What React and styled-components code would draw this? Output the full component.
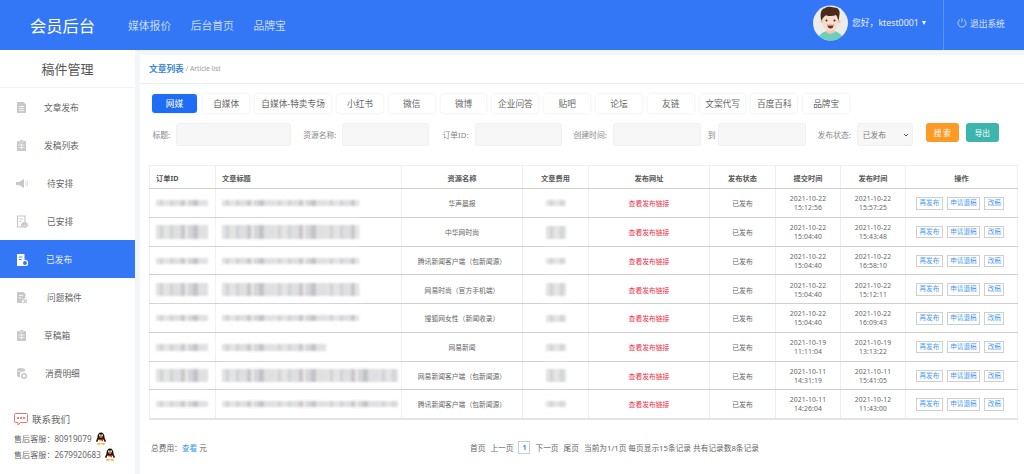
import styled, { createGlobalStyle } from "styled-components";

const GlobalStyle = createGlobalStyle`
  html, body {
    margin: 0;
    padding: 0;
    background: #f1f7f9;
    font-family: "Noto Sans", "Noto Sans CJK SC", sans-serif;
  }
  * {
    box-sizing: border-box;
  }
`;

const NAV_LINKS = ["媒体报价", "后台首页", "品牌宝"];
const TABS = ["网媒", "自媒体", "自媒体-特卖专场", "小红书", "微信", "微博", "企业问答", "贴吧", "论坛", "友链", "文案代写", "百度百科", "品牌宝"];
const MENU = [
  { label: "文章发布", icon: "doc", gap: 18 },
  { label: "发稿列表", icon: "list", gap: 18 },
  { label: "待安排", icon: "speaker", gap: 21 },
  { label: "已安排", icon: "check", gap: 21 },
  { label: "已发布", icon: "send", gap: 20, active: true },
  { label: "问题稿件", icon: "issue", gap: 21 },
  { label: "草稿箱", icon: "list", gap: 18 },
  { label: "消费明细", icon: "coins", gap: 19 },
];
const ROWS = [
  { id: 6, title: 6, tw: 137, fee: 6, media: "华声晨报", sub: "2021-10-22|15:12:56", pub: "2021-10-22|15:57:25" },
  { id: 14, title: 14, tw: 137, fee: 13, media: "中华网时尚", sub: "2021-10-22|15:04:40", pub: "2021-10-22|15:43:48" },
  { id: 6, title: 6, tw: 137, fee: 6, media: "腾讯新闻客户端（包新闻源）", sub: "2021-10-22|15:04:40", pub: "2021-10-22|16:58:10" },
  { id: 13, title: 13, tw: 137, fee: 13, media: "网易时尚（官方手机端）", sub: "2021-10-22|15:04:40", pub: "2021-10-22|15:12:11" },
  { id: 6, title: 6, tw: 137, fee: 7, media: "搜狐网女性（新闻收录）", sub: "2021-10-22|15:04:40", pub: "2021-10-22|16:09:43" },
  { id: 7, title: 7, tw: 104, fee: 7, media: "网易新闻", sub: "2021-10-19|11:11:04", pub: "2021-10-19|13:13:22" },
  { id: 13, title: 13, tw: 176, fee: 13, media: "网易新闻客户端（包新闻源）", sub: "2021-10-11|14:31:19", pub: "2021-10-11|15:41:05" },
  { id: 6, title: 6, tw: 176, fee: 6, media: "腾讯新闻客户端（包新闻源）", sub: "2021-10-11|14:26:04", pub: "2021-10-12|11:43:00" },
];
const COLUMNS = [66, 186, 121, 66, 121, 66, 65, 65, 112];
const HEADS = ["订单ID", "文章标题", "资源名称", "文章费用", "发布网址", "发布状态", "提交时间", "发布时间", "操作"];

const MenuIcon = ({ type, color }) => {
  const hole = color === "#fff" ? "#3377f6" : "#fff";
  return (
    <svg width="12" height="13" viewBox="0 0 12 13">
      {type === "doc" && (
        <>
          <path d="M1 1h6.5L10 3.5V12H1z" fill={color} />
          <path d="M3 5.5h5M3 7.5h5M3 9.5h5" stroke={hole} strokeWidth=".8" />
        </>
      )}
      {type === "list" && (
        <>
          <rect x="1" y="2" width="9" height="10" rx="1" fill={color} />
          <rect x="3.5" y="1" width="4" height="2" fill={color} stroke={hole} strokeWidth=".4" />
          <path d="M2.5 6h6M2.5 8.5h6M5.5 4.5v6" stroke={hole} strokeWidth=".7" />
        </>
      )}
      {type === "speaker" && (
        <>
          <path d="M0 5h3l5-3v9L3 8H0z" fill={color} />
          <path d="M9.3 4.5c.7 1.2.7 2.8 0 4M10.8 3.5c1.1 1.8 1.1 4.2 0 6" fill="none" stroke={color} strokeWidth=".7" />
        </>
      )}
      {type === "check" && (
        <>
          <path d="M1.5 1h7.5v6.5a3 3 0 0 0-3 4.5H1.5z" fill="none" stroke={color} strokeWidth="1.2" />
          <path d="M3 4h4M3 6.5h2.5" stroke={color} strokeWidth=".9" />
          <circle cx="9" cy="10" r="2.8" fill={color} />
          <path d="M7.8 10l1 1 1.4-1.6" fill="none" stroke={hole} strokeWidth=".6" />
        </>
      )}
      {type === "send" && (
        <>
          <path d="M1 1h7.5v12H1z" fill={color} />
          <path d="M3 4h3.5M3 6.5h2.5" stroke={hole} strokeWidth=".9" />
          <circle cx="9" cy="10" r="2.6" fill={hole} stroke={color} strokeWidth="1.2" />
        </>
      )}
      {type === "issue" && (
        <>
          <path d="M1 1h6.5L9.5 3v4.5a3 3 0 0 0-3 4.5H1z" fill={color} />
          <path d="M3 4.5h4M3 7h2.5" stroke={hole} strokeWidth=".8" />
          <path d="M7.5 8.5l3.5 3.5M11 8.5l-3.5 3.5" stroke={color} strokeWidth="1.2" />
        </>
      )}
      {type === "coins" && (
        <>
          <ellipse cx="5" cy="2.8" rx="4" ry="1.8" fill={color} />
          <path d="M1 3.5v5c0 1 1.5 1.8 3 1.8V7a3 3 0 0 1 5-2V3.5c-.8 1.2-2 1.6-4 1.6s-3.2-.4-4-1.6z" fill={color} />
          <circle cx="8" cy="9" r="3" fill={color} />
          <circle cx="8" cy="9" r="1.4" fill={hole} />
        </>
      )}
    </svg>
  );
};

const Penguin = () => (
  <svg width="12" height="13" viewBox="0 0 12 13">
    <path d="M2.3 9.4C1.4 10 .9 9.7 1.3 8.4c.3-1 1-1.8 1.1-2.6C2.5 2.5 3.8.5 6 .5s3.5 2 3.6 5.3c.1.8.8 1.6 1.1 2.6.4 1.3-.1 1.6-1 1z" fill="#15120f" />
    <path d="M3.1 7.4c1.6.9 4.2.9 5.8 0 .5 1.8.1 3.4-1 4H4.1c-1.1-.6-1.5-2.2-1-4z" fill="#fff" />
    <path d="M2.7 6.4c2 1 4.6 1 6.6 0l.1 1.2c-.5.3-1 .5-1.5.6l.2 1.6-1.4-1.4c-1.5.1-2.9-.1-4-.8z" fill="#e0201c" />
    <ellipse cx="4.9" cy="3.4" rx=".8" ry="1.1" fill="#fff" />
    <ellipse cx="7.1" cy="3.4" rx=".8" ry="1.1" fill="#fff" />
    <ellipse cx="6" cy="5" rx="1.6" ry=".7" fill="#f5b31b" />
    <ellipse cx="3.9" cy="11.8" rx="2" ry=".9" fill="#f5b31b" />
    <ellipse cx="8.1" cy="11.8" rx="2" ry=".9" fill="#f5b31b" />
  </svg>
);

const Avatar = () => (
  <svg width="35" height="36" viewBox="0 0 35 36">
    <clipPath id="avatar-clip">
      <circle cx="17.5" cy="18" r="17.5" />
    </clipPath>
    <g clipPath="url(#avatar-clip)">
      <rect width="35" height="36" fill="#ececec" />
      <path d="M5 36c0-7 5-10 12.500-10S30 29 30 36z" fill="#6fcfb6" />
      <path d="M13.500 22h8v5c-1.500 2.500-6.500 2.500-8 0z" fill="#efc6b0" />
      <ellipse cx="17.500" cy="16.500" rx="8.500" ry="9.500" fill="#f8dccb" />
      <circle cx="8.800" cy="16.500" r="1.500" fill="#efc6b0" />
      <circle cx="26.200" cy="16.500" r="1.500" fill="#efc6b0" />
      <path d="M8.500 16C6.500 9 8 3.500 12 3.200c1.500-1.700 6-1.700 9-.7 3.500-.4 6.500 2.500 5.500 7-.3 2-.6 4.500-1 6.500-.6-2-1.200-4.500-2.500-6-3 1.500-7 1.400-10 .2-2 1-3.500 3-4.500 5.800z" fill="#4a2c1d" />
      <circle cx="13.500" cy="15.500" r="1" fill="#3a2419" />
      <circle cx="21.500" cy="15.500" r="1" fill="#3a2419" />
      <path d="M14.500 19.500h6c0 3-1.300 4-3 4s-3-1-3-4z" fill="#7a2a20" />
      <path d="M15 19.500h5v1h-5z" fill="#fff" />
    </g>
  </svg>
);

const App = () => (
  <>
    <GlobalStyle />
    <Page>
      <Header>
        <Brand>会员后台</Brand>
        <Nav>
          {NAV_LINKS.map((item) => (
            <NavLink key={item}>{item}</NavLink>
          ))}
        </Nav>
        <UserBox>
          <Avatar />
          <Greeting>您好，ktest0001</Greeting>
          <Caret />
        </UserBox>
        <LogoutBox>
          <svg width="10" height="10" viewBox="0 0 10 10" fill="none" stroke="#dbe7fd" strokeWidth=".8">
            <path d="M3 1.600a4 4 0 1 0 4 0M5 .3v4" />
          </svg>
          退出系统
        </LogoutBox>
      </Header>
      <Body>
        <Sidebar>
          <SideTitle>稿件管理</SideTitle>
          <Menu>
            {MENU.map((item) => (
              <MenuItem key={item.label} $active={item.active} $gap={item.gap}>
                <MenuIcon type={item.icon} color={item.active ? "#fff" : "#c8c8c8"} />
                {item.label}
              </MenuItem>
            ))}
          </Menu>
          <Contact>
            <ContactTitle>
              <svg width="14" height="14" viewBox="0 0 14 14">
                <path d="M1.500 1.500h11a1 1 0 0 1 1 1v7a1 1 0 0 1-1 1H6.500l-2.500 2.500v-2.500H1.500a1 1 0 0 1-1-1v-7a1 1 0 0 1 1-1z" fill="#fff" stroke="#f0605c" strokeWidth=".9" />
                <circle cx="4" cy="6" r=".9" fill="#e8403c" />
                <circle cx="7" cy="6" r=".9" fill="#e8403c" />
                <circle cx="10" cy="6" r=".9" fill="#e8403c" />
              </svg>
              联系我们
            </ContactTitle>
            <ContactLine>
              售后客服：80919079 <Penguin />
            </ContactLine>
            <ContactLine>
              售后客服：2679920683 <Penguin />
            </ContactLine>
          </Contact>
        </Sidebar>
        <Main>
          <Crumb>
            <CrumbTitle>文章列表</CrumbTitle>
            <CrumbSub>/ Article list</CrumbSub>
          </Crumb>
          <Content>
            <Tabs>
              {TABS.map((tab, i) => (
                <Tab key={tab} $active={i === 0} $wide={i === 2}>
                  {tab}
                </Tab>
              ))}
            </Tabs>
            <Filters>
              <Field>
                <FieldLabel>标题:</FieldLabel>
                <FieldInput $w={115} />
              </Field>
              <Field>
                <FieldLabel>资源名称:</FieldLabel>
                <FieldInput $w={87} />
              </Field>
              <Field $left={1}>
                <FieldLabel>订单ID:</FieldLabel>
                <FieldInput $w={87} />
              </Field>
              <Field>
                <FieldLabel>创建时间:</FieldLabel>
                <FieldInput $w={88} />
                <RangeLabel>到</RangeLabel>
                <FieldInput $w={88} />
              </Field>
              <Field>
                <FieldLabel>发布状态:</FieldLabel>
                <StatusSelect defaultValue="已发布">
                  <option>已发布</option>
                </StatusSelect>
              </Field>
              <ActionButton $bg="#fd9a26" $left={1}>搜 索</ActionButton>
              <ActionButton $bg="#3db5ae">导出</ActionButton>
            </Filters>
            <Table>
              <colgroup>
                {COLUMNS.map((w, i) => (
                  <col key={i} width={w} />
                ))}
              </colgroup>
              <thead>
                <tr>
                  {HEADS.map((head, i) => (
                    <Th key={head} $left={i < 2}>{head}</Th>
                  ))}
                </tr>
              </thead>
              <tbody>
                {ROWS.map((row, i) => (
                  <tr key={i}>
                    <Td>
                      <Smudge $w={52} $h={row.id} />
                    </Td>
                    <Td>
                      <Smudge $w={row.tw} $h={row.title} />
                    </Td>
                    <Td>{row.media}</Td>
                    <Td>
                      <Smudge $w={20} $h={row.fee} $center />
                    </Td>
                    <Td>
                      <LinkText>查看发布链接</LinkText>
                    </Td>
                    <Td>已发布</Td>
                    <Td>
                      {row.sub.split("|").map((t) => (
                        <DateLine key={t}>{t}</DateLine>
                      ))}
                    </Td>
                    <Td>
                      {row.pub.split("|").map((t) => (
                        <DateLine key={t}>{t}</DateLine>
                      ))}
                    </Td>
                    <Td>
                      <Ops>
                        <OpButton>再发布</OpButton>
                        <OpButton>申请退稿</OpButton>
                        <OpButton>改稿</OpButton>
                      </Ops>
                    </Td>
                  </tr>
                ))}
              </tbody>
            </Table>
            <Footer>
              <Total>
                总费用：<TotalLink>查看</TotalLink> 元
              </Total>
              <Pager>
                <span>首页</span>
                <span>上一页</span>
                <PageBox>1</PageBox>
                <span>下一页</span>
                <span>尾页</span>
                <span>当前为1/1页 每页显示15条记录 共有记录数8条记录</span>
              </Pager>
            </Footer>
          </Content>
        </Main>
      </Body>
    </Page>
  </>
);

export default App;

const Page = styled.div`
  width: 1024px;
  height: 474px;
  overflow: hidden;
  display: flex;
  flex-direction: column;
`;

const Header = styled.header`
  height: 50px;
  flex: none;
  background: #3377f6;
  display: flex;
  align-items: center;
  padding-left: 30px;
`;

const Brand = styled.div`
  font-size: 16.3px;
  color: #fff;
  width: 98px;
`;

const Nav = styled.nav`
  display: flex;
  gap: 19.500px;
  flex: 1;
`;

const NavLink = styled.a`
  font-size: 10.800px;
  color: #c6dafc;
`;

const UserBox = styled.div`
  display: flex;
  align-items: center;
  gap: 3px;
  width: 130px;
  color: #e8f0fe;
  margin-left: 0;
  padding-bottom: 5px;
`;

const Greeting = styled.span`
  font-size: 8.800px;
  margin-left: 1px;
`;

const Caret = styled.i`
  border-top: 4px solid #fff;
  border-left: 2.500px solid transparent;
  border-right: 2.500px solid transparent;
`;

const LogoutBox = styled.div`
  height: 50px;
  width: 81px;
  border-left: 1px solid #5a92f8;
  display: flex;
  align-items: center;
  justify-content: flex-start;
  gap: 3px;
  padding-left: 13px;
  font-size: 8.700px;
  color: #dbe7fd;
  padding-bottom: 4px;
`;

const Body = styled.div`
  flex: 1;
  display: flex;
  min-height: 0;
  gap: 5px;
`;

const Sidebar = styled.aside`
  width: 135px;
  flex: none;
  background: #fff;
  display: flex;
  flex-direction: column;
`;

const SideTitle = styled.h2`
  margin: 0;
  height: 38px;
  flex: none;
  font-size: 13px;
  font-weight: 400;
  color: #555;
  text-align: center;
  line-height: 38px;
  border-bottom: 1px solid #f2f2f2;
`;

const Menu = styled.div`
  display: flex;
  flex-direction: column;
`;

const MenuItem = styled.div`
  height: 38px;
  display: flex;
  align-items: center;
  padding-left: 16px;
  gap: ${({ $gap }) => $gap - 2}px;
  font-size: 8.700px;
  color: ${({ $active }) => ($active ? "#e6effe" : "#666")};
  background: ${({ $active }) => ($active ? "#3377f6" : "transparent")};
`;

const Contact = styled.div`
  padding: 19px 0 0 14px;
  display: flex;
  flex-direction: column;
`;

const ContactTitle = styled.div`
  display: flex;
  align-items: center;
  gap: 4px;
  font-size: 9.500px;
  color: #666;
  height: 16px;
  margin-bottom: 4px;
`;

const ContactLine = styled.div`
  display: flex;
  align-items: center;
  gap: 3px;
  font-size: 8.100px;
  color: #666;
  height: 15.500px;
`;

const Main = styled.main`
  flex: 1;
  min-width: 0;
  margin-top: 5px;
  background: #fff;
  display: flex;
  flex-direction: column;
`;

const Crumb = styled.div`
  height: 29px;
  flex: none;
  display: flex;
  align-items: center;
  gap: 2px;
  padding: 0 0 1px 9px;
  border-bottom: 1px solid #eee;
`;

const CrumbTitle = styled.span`
  font-size: 8.700px;
  font-weight: 700;
  color: #3b86d6;
`;

const CrumbSub = styled.span`
  font-size: 6.700px;
  color: #999;
`;

const Content = styled.div`
  padding: 10px 7px 0 9px;
  display: flex;
  flex-direction: column;
`;

const Tabs = styled.div`
  display: flex;
  gap: 6px;
  padding-left: 2.500px;
`;

const Tab = styled.button`
  height: 19px;
  width: ${({ $wide }) => ($wide ? 76 : 45.800)}px;
  flex: none;
  padding: 0;
  border: 0;
  border-radius: 3px;
  font-family: inherit;
  font-size: 8.700px;
  color: ${({ $active }) => ($active ? "#fff" : "#666")};
  background: ${({ $active }) => ($active ? "#1f6cf5" : "#fff")};
  box-shadow: 0 0 3px rgba(0, 0, 0, 0.1);
`;

const Filters = styled.div`
  display: flex;
  align-items: flex-start;
  gap: 12px;
  margin-top: 10px;
  padding-left: 3.500px;
`;

const Field = styled.div`
  display: flex;
  align-items: center;
  gap: 6px;
  margin-left: ${({ $left }) => $left || 0}px;
`;

const FieldLabel = styled.span`
  font-size: 7.800px;
  color: #888;
`;

const RangeLabel = styled(FieldLabel)`
  margin: 0 -4px 0 1px;
`;

const FieldInput = styled.input`
  width: ${({ $w }) => $w}px;
  height: 23px;
  background: #f7f7f7;
  border: 1px solid #f0f0f0;
  border-radius: 3px;
  outline: none;
`;

const StatusSelect = styled.select`
  width: 56px;
  height: 23px;
  appearance: none;
  background: #f7f7f7 url("data:image/svg+xml,%3Csvg xmlns='http://www.w3.org/2000/svg' width='6' height='4'%3E%3Cpath d='M1 1l2 2 2-2' fill='none' stroke='%23555' stroke-width='1'/%3E%3C/svg%3E") no-repeat right 3px center;
  border: 1px solid #f0f0f0;
  border-radius: 3px;
  font-family: inherit;
  font-size: 7.700px;
  color: #777;
  padding-left: 5px;
`;

const ActionButton = styled.button`
  width: 33px;
  height: 19px;
  border: 0;
  padding: 0;
  border-radius: 3px;
  font-family: inherit;
  font-size: 7.700px;
  color: #fff;
  background: ${({ $bg }) => $bg};
  margin-left: ${({ $left }) => ($left ? 1 : -5)}px;
`;

const Table = styled.table`
  width: 868px;
  margin-top: 19px;
  table-layout: fixed;
  border-collapse: collapse;
  border: 1px solid #eeeeee;
  border-bottom: 2px solid #e4e4e4;
`;

const Th = styled.th`
  height: 23px;
  padding: ${({ $left }) => ($left ? "1px 0 0 6px" : "1px 0 0")};
  text-align: ${({ $left }) => ($left ? "left" : "center")};
  font-size: 7.200px;
  font-weight: 700;
  color: #555;
  border-right: 1px solid #eee;
  border-bottom: 1px solid #cfcfcf;
`;

const Td = styled.td`
  height: 28.750px;
  padding: 1px 0 0;
  text-align: center;
  font-size: 6.800px;
  color: #666;
  border-right: 1px solid #eee;
  border-bottom: 1px solid #cfcfcf;
`;

const Smudge = styled.div`
  position: relative;
  width: ${({ $w }) => $w}px;
  height: ${({ $h }) => $h}px;
  margin: ${({ $center }) => ($center ? "0 auto 0 23px" : "0 0 0 6px")};
  background-color: #dedee0;
  background-image: linear-gradient(
    90deg,
    #e2e2e4 0 8%,
    #d2d2d4 8% 14%,
    #e4e4e4 14% 26%,
    #d0d2d4 26% 33%,
    #dfdfe2 33% 48%,
    #c8c8ca 48% 55%,
    #ebe8e4 55% 62%,
    #d4d6da 62% 72%,
    #c4c4c6 72% 80%,
    #e0e0e2 80% 100%
  );
  background-size: 52px 100%;
  filter: blur(1px);
  box-shadow: 0 0 5px 5px rgba(255, 255, 255, 0.7);
`;

const LinkText = styled.a`
  color: #f0304a;
`;

const DateLine = styled.div`
  line-height: 9px;
  letter-spacing: 0.1px;
`;

const Ops = styled.div`
  display: flex;
  justify-content: flex-start;
  gap: 4px;
  padding-left: 10px;
`;

const OpButton = styled.button`
  height: 12.500px;
  padding: 0 2.500px;
  border: 1px solid #cfcfcf;
  background: #fff;
  font-family: inherit;
  font-size: 6.600px;
  line-height: 1;
  color: #4a9bf0;
  white-space: nowrap;
`;

const Footer = styled.div`
  display: flex;
  align-items: center;
  margin-top: 21px;
  font-size: 7.700px;
  color: #666;
`;

const Total = styled.div`
  width: 321px;
  padding-left: 2px;
`;

const TotalLink = styled.a`
  color: #3b9af0;
`;

const Pager = styled.div`
  display: flex;
  align-items: center;
  gap: 5px;
`;

const PageBox = styled.span`
  width: 12px;
  height: 13px;
  border: 1px solid #ccc;
  color: #3b9af0;
  font-weight: 700;
  display: flex;
  align-items: center;
  justify-content: center;
`;
